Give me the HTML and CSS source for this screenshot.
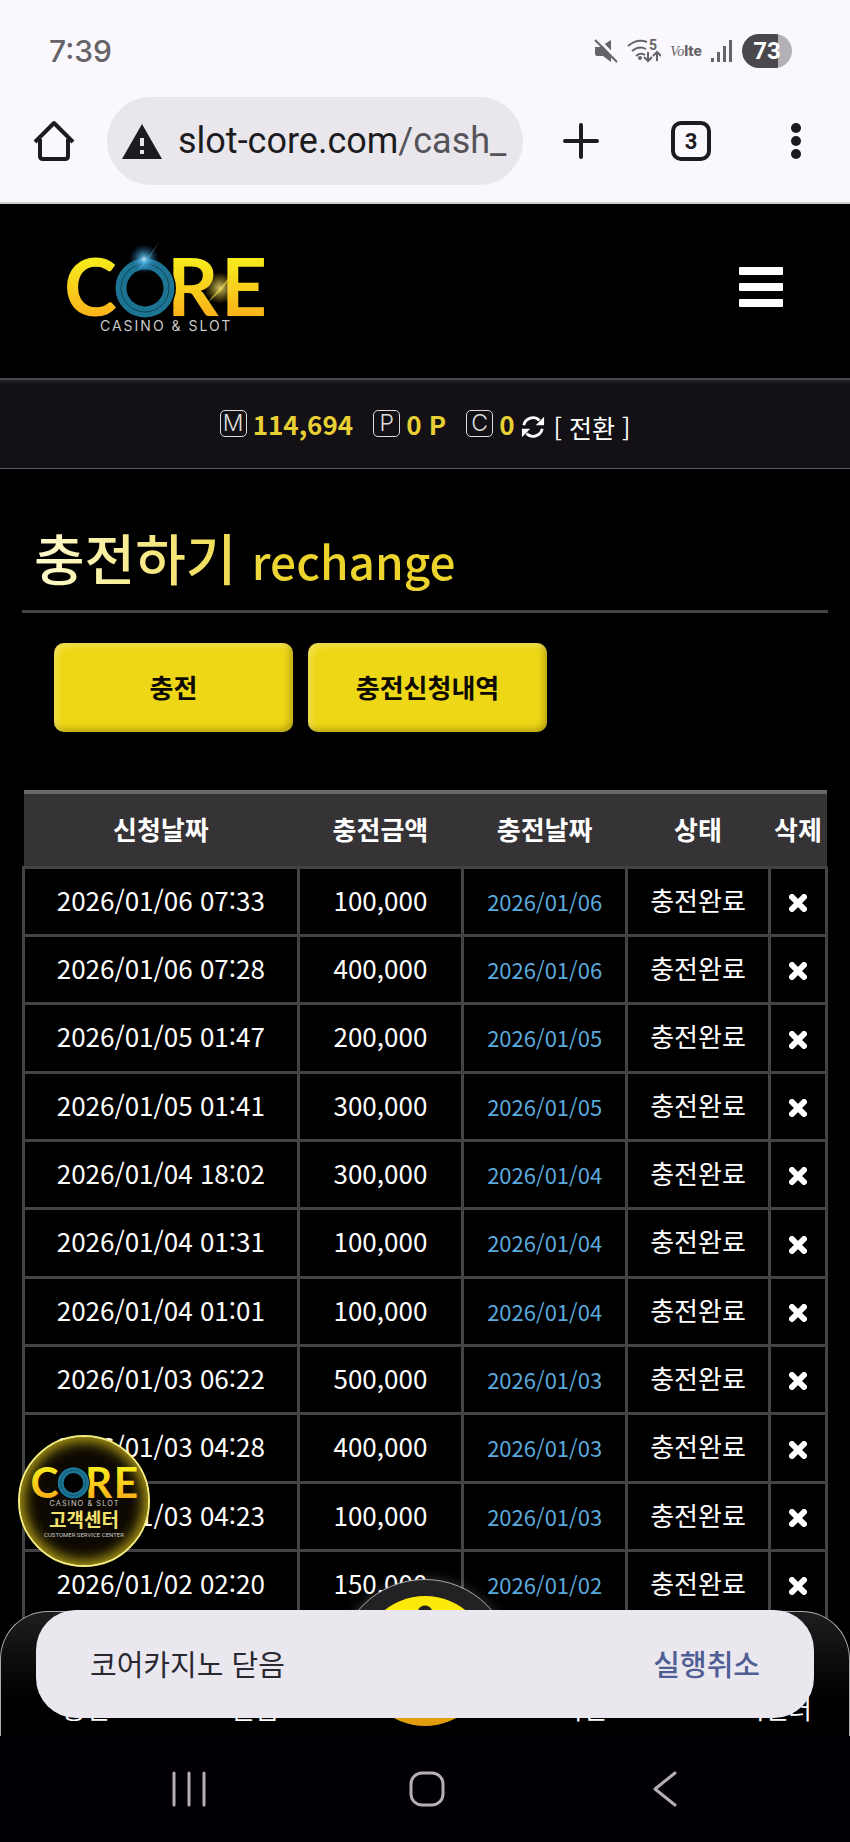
FILE: index.html
```html
<!DOCTYPE html>
<html lang="ko">
<head>
    <meta charset="UTF-8">
    <meta name="viewport" content="width=device-width, initial-scale=1.0">
    <title>충전하기</title>
    <link rel="stylesheet" href="styles.css">
</head>
<body>

    <!-- gradients and logo shared by the header and the floating button -->
    <svg class="defs" aria-hidden="true">
        <defs>
            <linearGradient id="gold" x1="0" y1="0" x2="0" y2="1">
                <stop offset="0.2" stop-color="#f5ee1c"/>
                <stop offset="0.9" stop-color="#fbab1a"/>
            </linearGradient>
            <radialGradient id="spark">
                <stop offset="0" stop-color="#fff"/>
                <stop offset="0.2" stop-color="#5cc4f0"/>
                <stop offset="1" stop-color="#1a5a9a" stop-opacity="0"/>
            </radialGradient>
            <radialGradient id="flare">
                <stop offset="0" stop-color="#fff58a"/>
                <stop offset="1" stop-color="#f5c518" stop-opacity="0"/>
            </radialGradient>
            <symbol id="logo" viewBox="0 0 210 100">
                <g class="logo-word" fill="url(#gold)">
                    <text x="4" y="75">C</text>
                    <text x="107" y="75">R</text>
                    <text x="161" y="75">E</text>
                </g>
                <circle cx="85" cy="47" r="31" fill="#000"/>
                <circle cx="85" cy="47" r="24" fill="none" stroke="#1c7492" stroke-width="11"/>
                <circle cx="85" cy="47" r="24" fill="none" stroke="#0c4558" stroke-width="1"/>
                <text class="logo-sub" x="40" y="90">CASINO &amp; SLOT</text>
            </symbol>
        </defs>
    </svg>

    <div class="status-bar">
        <span class="clock">7:39</span>
        <div class="status-icons">
            <svg width="24" height="24" viewBox="0 0 24 24">
                <path d="M1 8h5l11-7v22l-8-6H3q-2 0-2-3z" fill="#666468"/>
                <path d="M4 0l20 21" stroke="#faf8fc" stroke-width="3"/>
                <path d="M1 1l22 22" stroke="#666468" stroke-width="2"/>
            </svg>
            <svg width="34" height="26" viewBox="0 0 34 26" fill="none" stroke="#666468" stroke-width="2">
                <path d="M1 8Q10 0 20 4M5 13q7-6 14-2M9 18q4-4 9-1"/>
                <circle cx="13" cy="20" r="1"/>
                <path d="M21 14v9m-4-4l4 4 4-4M30 23v-9m-4 4l4-4 4 4"/>
                <text class="wifi-num" x="22" y="12">5</text>
            </svg>
            <span class="volte"><i>Vo</i><b>lte</b></span>
            <svg width="22" height="24" viewBox="0 0 22 24" fill="#666468">
                <rect x="0" y="19" width="3" height="4"/>
                <rect x="6" y="13" width="3" height="10"/>
                <rect x="12" y="7" width="3" height="16"/>
                <rect x="18" y="1" width="3" height="22"/>
            </svg>
            <span class="battery">73</span>
        </div>
    </div>

    <div class="toolbar">
        <button class="tool" aria-label="홈">
            <svg width="42" height="42" viewBox="0 0 42 42" fill="none" stroke="#1c1b20" stroke-width="4" stroke-linejoin="round">
                <path d="M2 22L21 3l19 19M7 19v17q0 3 3 3h22q3 0 3-3V19"/>
            </svg>
        </button>
        <div class="address">
            <svg width="40" height="35" viewBox="0 0 40 35">
                <path d="M20 0l20 35H0z" fill="#1c1b20"/>
                <path d="M18 14h4v8h-4zM18 26h4v4h-4z" fill="#e9e7eb"/>
            </svg>
            <span class="url">slot-core.com<span>/cash_</span></span>
        </div>
        <div class="tools">
            <button class="tool" aria-label="새 탭">
                <svg width="36" height="36" viewBox="0 0 36 36" stroke="#1c1b20" stroke-width="4" stroke-linecap="round">
                    <path d="M18 2v32M2 18h32"/>
                </svg>
            </button>
            <button class="tool tabs" aria-label="탭 3개">3</button>
            <button class="tool" aria-label="메뉴">
                <svg width="10" height="36" viewBox="0 0 10 36" fill="#1c1b20">
                    <circle cx="5" cy="5" r="5"/>
                    <circle cx="5" cy="18" r="5"/>
                    <circle cx="5" cy="31" r="5"/>
                </svg>
            </button>
        </div>
    </div>

    <div class="page">
        <header class="header">
            <a href="#" aria-label="CORE">
                <svg class="logo" width="210" height="100" viewBox="0 0 210 100">
                    <use href="#logo"/>
                    <circle cx="84" cy="18" r="15" fill="url(#spark)" opacity="0.8"/>
                    <path d="M76 32L100 0 86 22z" fill="#5cc4f0" opacity="0.4"/>
                    <circle cx="160" cy="47" r="16" fill="url(#flare)" opacity="0.8"/>
                    <path d="M146 63l28-32-12 18z" fill="#f5e04a" opacity="0.6"/>
                </svg>
            </a>
            <button class="menu" aria-label="전체 메뉴"><i></i><i></i><i></i></button>
        </header>

        <div class="user-bar">
            <span class="badge">M</span>
            <b class="money">114,694</b>
            <span class="badge">P</span>
            <b class="money">0 P</b>
            <span class="badge">C</span>
            <b>0</b>
            <a class="switch" href="#">
                <svg width="24" height="26" viewBox="0 0 26 26" fill="none" stroke="#fff" stroke-width="3">
                    <path d="M3 11A10 10 0 0 1 20 6M23 15A10 10 0 0 1 6 20"/>
                    <path d="M25 2v9h-9zM1 24v-9h9z" fill="#fff" stroke="none"/>
                </svg>
                [ 전환 ]
            </a>
        </div>

        <main class="content">
            <h1><span class="title">충전하기 <small>rechange</small></span></h1>

            <div class="buttons">
                <button>충전</button>
                <button>충전신청내역</button>
            </div>

            <table>
                <colgroup>
                    <col class="c-date">
                    <col class="c-amount">
                    <col class="c-done">
                    <col class="c-state">
                    <col>
                </colgroup>
                <thead>
                    <tr>
                        <th>신청날짜</th>
                        <th>충전금액</th>
                        <th>충전날짜</th>
                        <th>상태</th>
                        <th>삭제</th>
                    </tr>
                </thead>
                <tbody id="history"></tbody>
            </table>
        </main>

        <a class="support" href="#">
            <svg class="support-logo" width="112" height="53" viewBox="0 0 210 100"><use href="#logo"/></svg>
            <strong>고객센터</strong>
            <small>CUSTOMER SERVICE CENTER</small>
        </a>

        <div class="bump"></div>
        <nav class="bottom-nav">
            <a href="#">충전</a>
            <a href="#">출금</a>
            <a href="#" aria-label="내 정보"><span class="coin"></span></a>
            <a href="#">이벤트</a>
            <a href="#">고객센터</a>
        </nav>

        <div class="toast" role="status">
            <span>코어카지노 닫음</span>
            <button>실행취소</button>
        </div>
    </div>

    <div class="system-nav">
        <button aria-label="최근 앱">
            <svg width="36" height="36" viewBox="0 0 36 36" stroke="#b4b0b6" stroke-width="3" stroke-linecap="round">
                <path d="M3 2v32M18 2v32M33 2v32"/>
            </svg>
        </button>
        <button aria-label="홈 화면">
            <svg width="36" height="36" viewBox="0 0 36 36" fill="none" stroke="#b4b0b6" stroke-width="3">
                <rect x="2" y="2" width="32" height="32" rx="11"/>
            </svg>
        </button>
        <button aria-label="뒤로">
            <svg width="36" height="36" viewBox="0 0 36 36" fill="none" stroke="#b4b0b6" stroke-width="3" stroke-linecap="round" stroke-linejoin="round">
                <path d="M28 2L8 18l20 16"/>
            </svg>
        </button>
    </div>

    <script>
        const history_rows = [
            ["2026/01/06 07:33", "100,000"],
            ["2026/01/06 07:28", "400,000"],
            ["2026/01/05 01:47", "200,000"],
            ["2026/01/05 01:41", "300,000"],
            ["2026/01/04 18:02", "300,000"],
            ["2026/01/04 01:31", "100,000"],
            ["2026/01/04 01:01", "100,000"],
            ["2026/01/03 06:22", "500,000"],
            ["2026/01/03 04:28", "400,000"],
            ["2026/01/03 04:23", "100,000"],
            ["2026/01/02 02:20", "150,000"]
        ];

        document.getElementById("history").innerHTML = history_rows.map(([date, amount]) => `
            <tr>
                <td>${date}</td>
                <td>${amount}</td>
                <td class="done">${date.split(" ")[0]}</td>
                <td>충전완료</td>
                <td><button class="delete" aria-label="삭제">
                    <svg width="18" height="18" viewBox="0 0 18 18" stroke="#fff" stroke-width="6" stroke-linecap="round">
                        <path d="M3 3l12 12M15 3L3 15"/>
                    </svg>
                </button></td>
            </tr>
        `).join("");
    </script>

</body>
</html>
```
FILE: styles.css
```css
* { box-sizing: border-box; }
body { margin: 0; height: 100vh; display: flex; flex-direction: column; overflow: hidden; background: #000; color: #fff; font-family: "Noto Sans CJK KR", "Noto Sans", sans-serif; font-size: 26px; }
button { border: 0; padding: 0; background: none; color: inherit; font: inherit; cursor: pointer; }
a { color: inherit; text-decoration: none; }
svg { display: block; flex: none; }
.defs { position: absolute; width: 0; height: 0; }

/* phone status bar */
.status-bar { flex: none; height: 97px; padding: 4px 58px 0 49px; display: flex; align-items: center; justify-content: space-between; background: #faf8fc; color: #666468; }
.clock { font: 500 30px "Inter", sans-serif; }
.status-icons { display: flex; align-items: center; gap: 9px; }
.wifi-num { font: 700 14px "Roboto", sans-serif; fill: #666468; stroke: none; }
.volte { display: flex; align-items: baseline; font: 14px "Inter", sans-serif; }
.volte i { font: italic 14px "Liberation Serif", serif; }
.volte b { font-weight: 800; }
.battery { width: 50px; height: 34px; border-radius: 17px; background: linear-gradient(to right, #4a484c 72%, #b3b1b5 72%); color: #fff; font: 700 24px/34px "Roboto", sans-serif; text-align: center; }

/* browser toolbar */
.toolbar { flex: none; height: 107px; padding: 0 49px 17px 33px; display: flex; align-items: center; background: #faf8fc; border-bottom: 2px solid #cfcdd1; }
.address { flex: 1; height: 88px; margin-left: 32px; padding: 0 15px; display: flex; align-items: center; gap: 16px; border-radius: 44px; background: #e9e7eb; color: #1c1b20; }
.url { font: 36px "Roboto", sans-serif; }
.url span { color: #55535a; }
.tools { width: 238px; margin-left: 40px; display: flex; align-items: center; justify-content: space-between; }
.tabs { width: 40px; height: 40px; margin-right: 8px; border: 4px solid #1c1b20; border-radius: 10px; color: #1c1b20; font: 700 22px "Roboto", sans-serif; }

.page { position: relative; flex: 1; overflow: hidden; }
.header { height: 174px; padding: 0 67px 0 60px; display: flex; align-items: center; justify-content: space-between; }
.logo-word { font: 700 80px "Lato", sans-serif; }
.logo-sub { font: 14px "Inter", sans-serif; letter-spacing: 2px; fill: #c9c9c9; }
.menu { width: 44px; margin-bottom: 8px; display: flex; flex-direction: column; gap: 8px; }
.menu i { height: 8px; border-radius: 1px; background: #fff; }

.user-bar { height: 91px; padding-bottom: 2px; display: flex; align-items: center; justify-content: center; border-top: 2px solid #49484b; border-bottom: 1px solid #5a585c; background: linear-gradient(#252428, #131115 4px); color: #e8d034; }
.badge { width: 27px; height: 27px; margin-right: 6px; border: 1px solid #ddd; border-radius: 5px; color: #ddd; font: 300 23px/25px "Inter", sans-serif; text-align: center; }
.money { margin-right: 20px; }
.switch { margin: 8px 0 0 7px; display: flex; align-items: center; gap: 8px; color: #fff; font-size: 25px; }

.content { padding: 0 22px; }
h1 { margin: 0 0 30px; padding: 43px 12px 6px; border-bottom: 3px solid #434245; font-weight: 500; font-size: 55px; line-height: 88px; }
.title { background: linear-gradient(to right, #fffbd0, #ecd42c 60%); -webkit-background-clip: text; background-clip: text; color: transparent; }
.title small { font-size: 46px; }

.buttons { display: flex; gap: 15px; margin: 0 32px 58px; }
.buttons button { width: 239px; height: 89px; padding-bottom: 3px; border-radius: 10px; background: #eed716; color: #0c0a02; font-weight: 700; box-shadow: inset 3px 3px 6px rgba(255, 255, 255, 0.3), inset -3px -3px 6px rgba(100, 80, 0, 0.4); }

table { width: 100%; table-layout: fixed; border-collapse: collapse; text-align: center; }
.c-date { width: 34.2%; }
.c-amount { width: 20.5%; }
.c-done { width: 20.4%; }
.c-state { width: 17.8%; }
th { height: 75px; padding: 0 0 2px; border-top: 4px solid #6a686b; background: #353336; white-space: nowrap; }
td { height: 68px; padding: 0 0 4px; border: 3px solid #434245; }
tbody tr:nth-child(3n) td { height: 69px; }
td.done { padding-bottom: 1px; color: #5ba9dc; font-size: 22px; }
.delete { display: block; margin: 8px auto 0; width: 18px; }

/* things that stay over the page */
.support { position: absolute; left: 18px; bottom: 169px; width: 132px; height: 132px; padding-top: 21px; display: flex; flex-direction: column; align-items: center; border: 2px solid #f6ee7c; border-radius: 50%; background: #0d0902; box-shadow: inset 0 0 14px 4px #b8a418; }
.support strong { margin-top: -4px; color: #f2e26b; font-size: 19px; line-height: 24px; }
.support small { font: 6px/8px "Roboto", sans-serif; color: #c9c9c9; white-space: nowrap; }
.bump { position: absolute; left: calc(50% - 88px); bottom: -19px; width: 176px; height: 176px; border: 1px solid #aaa; border-radius: 50%; background: #222123; box-shadow: 0 0 12px rgba(255, 255, 255, 0.2); }
.bottom-nav { position: absolute; left: 0; right: 0; bottom: 0; height: 125px; padding-bottom: 10px; display: flex; align-items: flex-end; border: 1px solid #aaa; border-bottom: 0; border-radius: 48px 48px 0 0; background: linear-gradient(#1e1d1f, #000 70%); line-height: 36px; white-space: nowrap; }
.bottom-nav a { flex: 1 1 0; text-align: center; }
.coin { display: block; width: 130px; height: 130px; margin: 0 auto; border-radius: 50%; background: radial-gradient(circle at 50% 17px, #222 7px, transparent 8px), linear-gradient(#fbe90c 20%, #e09a10); }
.toast { position: absolute; left: 36px; right: 36px; bottom: 18px; height: 108px; padding: 0 54px 2px; display: flex; align-items: center; justify-content: space-between; border-radius: 40px; background: #eae7ef; color: #2a2830; font-size: 29px; }
.toast button { color: #4f5e94; font-weight: 500; }

.system-nav { flex: none; height: 106px; padding: 0 66px 0 70px; display: grid; grid-template-columns: repeat(3, 1fr); align-items: center; background: #020004; }
.system-nav button { justify-self: center; }
```
